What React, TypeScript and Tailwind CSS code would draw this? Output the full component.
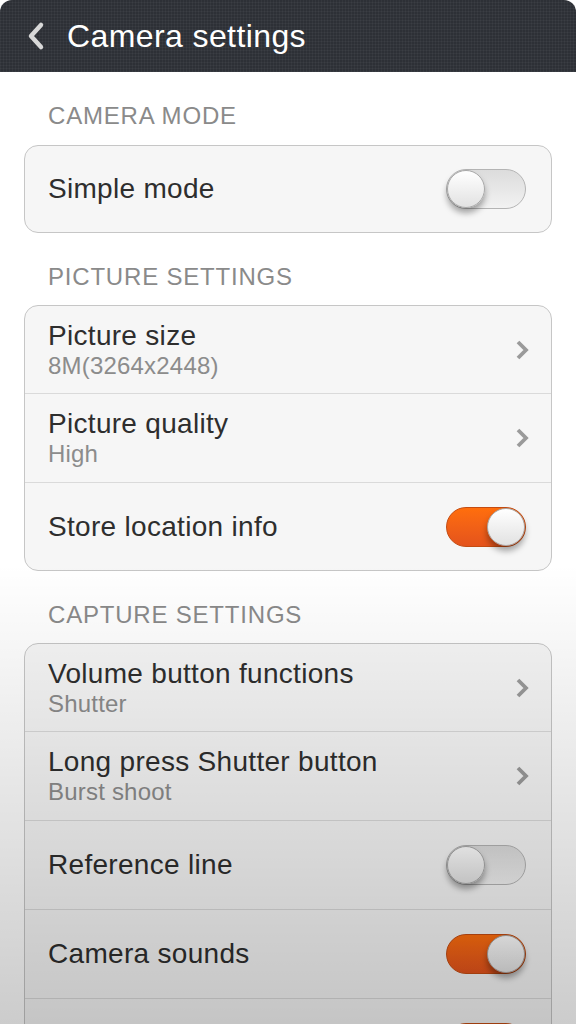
import React from "react";

const font = { fontFamily: '"Liberation Sans", Arial, sans-serif' };

function Toggle({ on }: { on: boolean }) {
  return (
    <div
      className={
        "relative w-[80px] h-[40px] rounded-full border flex items-center shrink-0 " +
        (on
          ? "bg-linear-to-b from-[#ff6e0c] to-[#e4531c] border-[#c44c12] justify-end"
          : "bg-linear-to-b from-[#dcdcdc] to-[#f2f2f2] border-[#b4b4b4] justify-start")
      }
    >
      <div className="w-[38px] h-[38px] rounded-full bg-linear-to-b from-[#ffffff] to-[#e2e2e2] border border-[#a8a8a8] shadow-[0_5px_6px_rgba(0,0,0,0.35)]" />
    </div>
  );
}

function Chevron() {
  return (
    <svg width="14" height="22" viewBox="0 0 14 22" className="shrink-0 mr-[-3px]">
      <path d="M3 3 L11 11 L3 19" fill="none" stroke="#9a9a9a" strokeWidth="3.8" strokeLinecap="butt" strokeLinejoin="miter" />
    </svg>
  );
}

type RowProps = {
  title?: string;
  sub?: string;
  toggle?: boolean;
  chevron?: boolean;
  h: string;
  divider?: boolean;
};

function Row({ title, sub, toggle, chevron, h, divider }: RowProps) {
  return (
    <div
      className={
        "flex items-center justify-between pl-[23px] pr-[25px] " +
        h +
        (divider ? " border-t border-[#dadada]" : "")
      }
    >
      <div className="flex flex-col">
        {title && <div className="text-[28px] leading-[32px] text-[#2e2e2e] tracking-[0.3px]">{title}</div>}
        {sub && <div className="text-[24px] leading-[28px] text-[#8c8c8c] tracking-[0.2px]">{sub}</div>}
      </div>
      {toggle !== undefined && <Toggle on={toggle} />}
      {chevron && <Chevron />}
    </div>
  );
}

function Section({ label, h }: { label: string; h: string }) {
  return (
    <div className={"flex items-start pt-[30px] pl-[48px] " + h}>
      <div className="text-[24px] leading-[28px] text-[#8a8a8a] tracking-[0.8px]">{label}</div>
    </div>
  );
}

function Card({ children }: { children: React.ReactNode }) {
  return (
    <div className="mx-[24px] rounded-[14px] border border-[#c6c6c6] bg-[#f6f6f6] flex flex-col overflow-hidden">
      {children}
    </div>
  );
}

export default function App() {
  return (
    <div className="relative w-[576px] h-[1024px] overflow-hidden bg-white" style={font}>
      <div className="h-[72px] rounded-t-[12px] bg-[#2d3036] bg-[repeating-linear-gradient(0deg,rgba(255,255,255,0.035)_0px,rgba(255,255,255,0.035)_1px,transparent_1px,transparent_3px),repeating-linear-gradient(90deg,rgba(255,255,255,0.035)_0px,rgba(255,255,255,0.035)_1px,transparent_1px,transparent_3px)] flex items-center pl-[24px]">
        <svg width="22" height="30" viewBox="0 0 22 30" className="shrink-0">
          <path d="M17 4 L7 15 L17 26" fill="none" stroke="#d8d8d8" strokeWidth="4.5" strokeLinecap="round" strokeLinejoin="round" />
        </svg>
        <div className="ml-[21px] text-[32px] leading-[40px] text-white tracking-[0.4px]">Camera settings</div>
      </div>

      <Section label="CAMERA MODE" h="h-[73px]" />
      <Card>
        <Row title="Simple mode" toggle={false} h="h-[86px]" />
      </Card>

      <Section label="PICTURE SETTINGS" h="h-[72px]" />
      <Card>
        <Row title="Picture size" sub="8M(3264x2448)" chevron h="h-[87px]" />
        <Row title="Picture quality" sub="High" chevron h="h-[89px]" divider />
        <Row title="Store location info" toggle={true} h="h-[88px]" divider />
      </Card>

      <Section label="CAPTURE SETTINGS" h="h-[72px]" />
      <Card>
        <Row title="Volume button functions" sub="Shutter" chevron h="h-[87px]" />
        <Row title="Long press Shutter button" sub="Burst shoot" chevron h="h-[89px]" divider />
        <Row title="Reference line" toggle={false} h="h-[89px]" divider />
        <Row title="Camera sounds" toggle={true} h="h-[89px]" divider />
        <Row toggle={true} h="h-[89px]" divider />
      </Card>

      <div className="pointer-events-none absolute inset-0 bg-linear-to-b from-transparent from-[55%] to-black/20" />
    </div>
  );
}
